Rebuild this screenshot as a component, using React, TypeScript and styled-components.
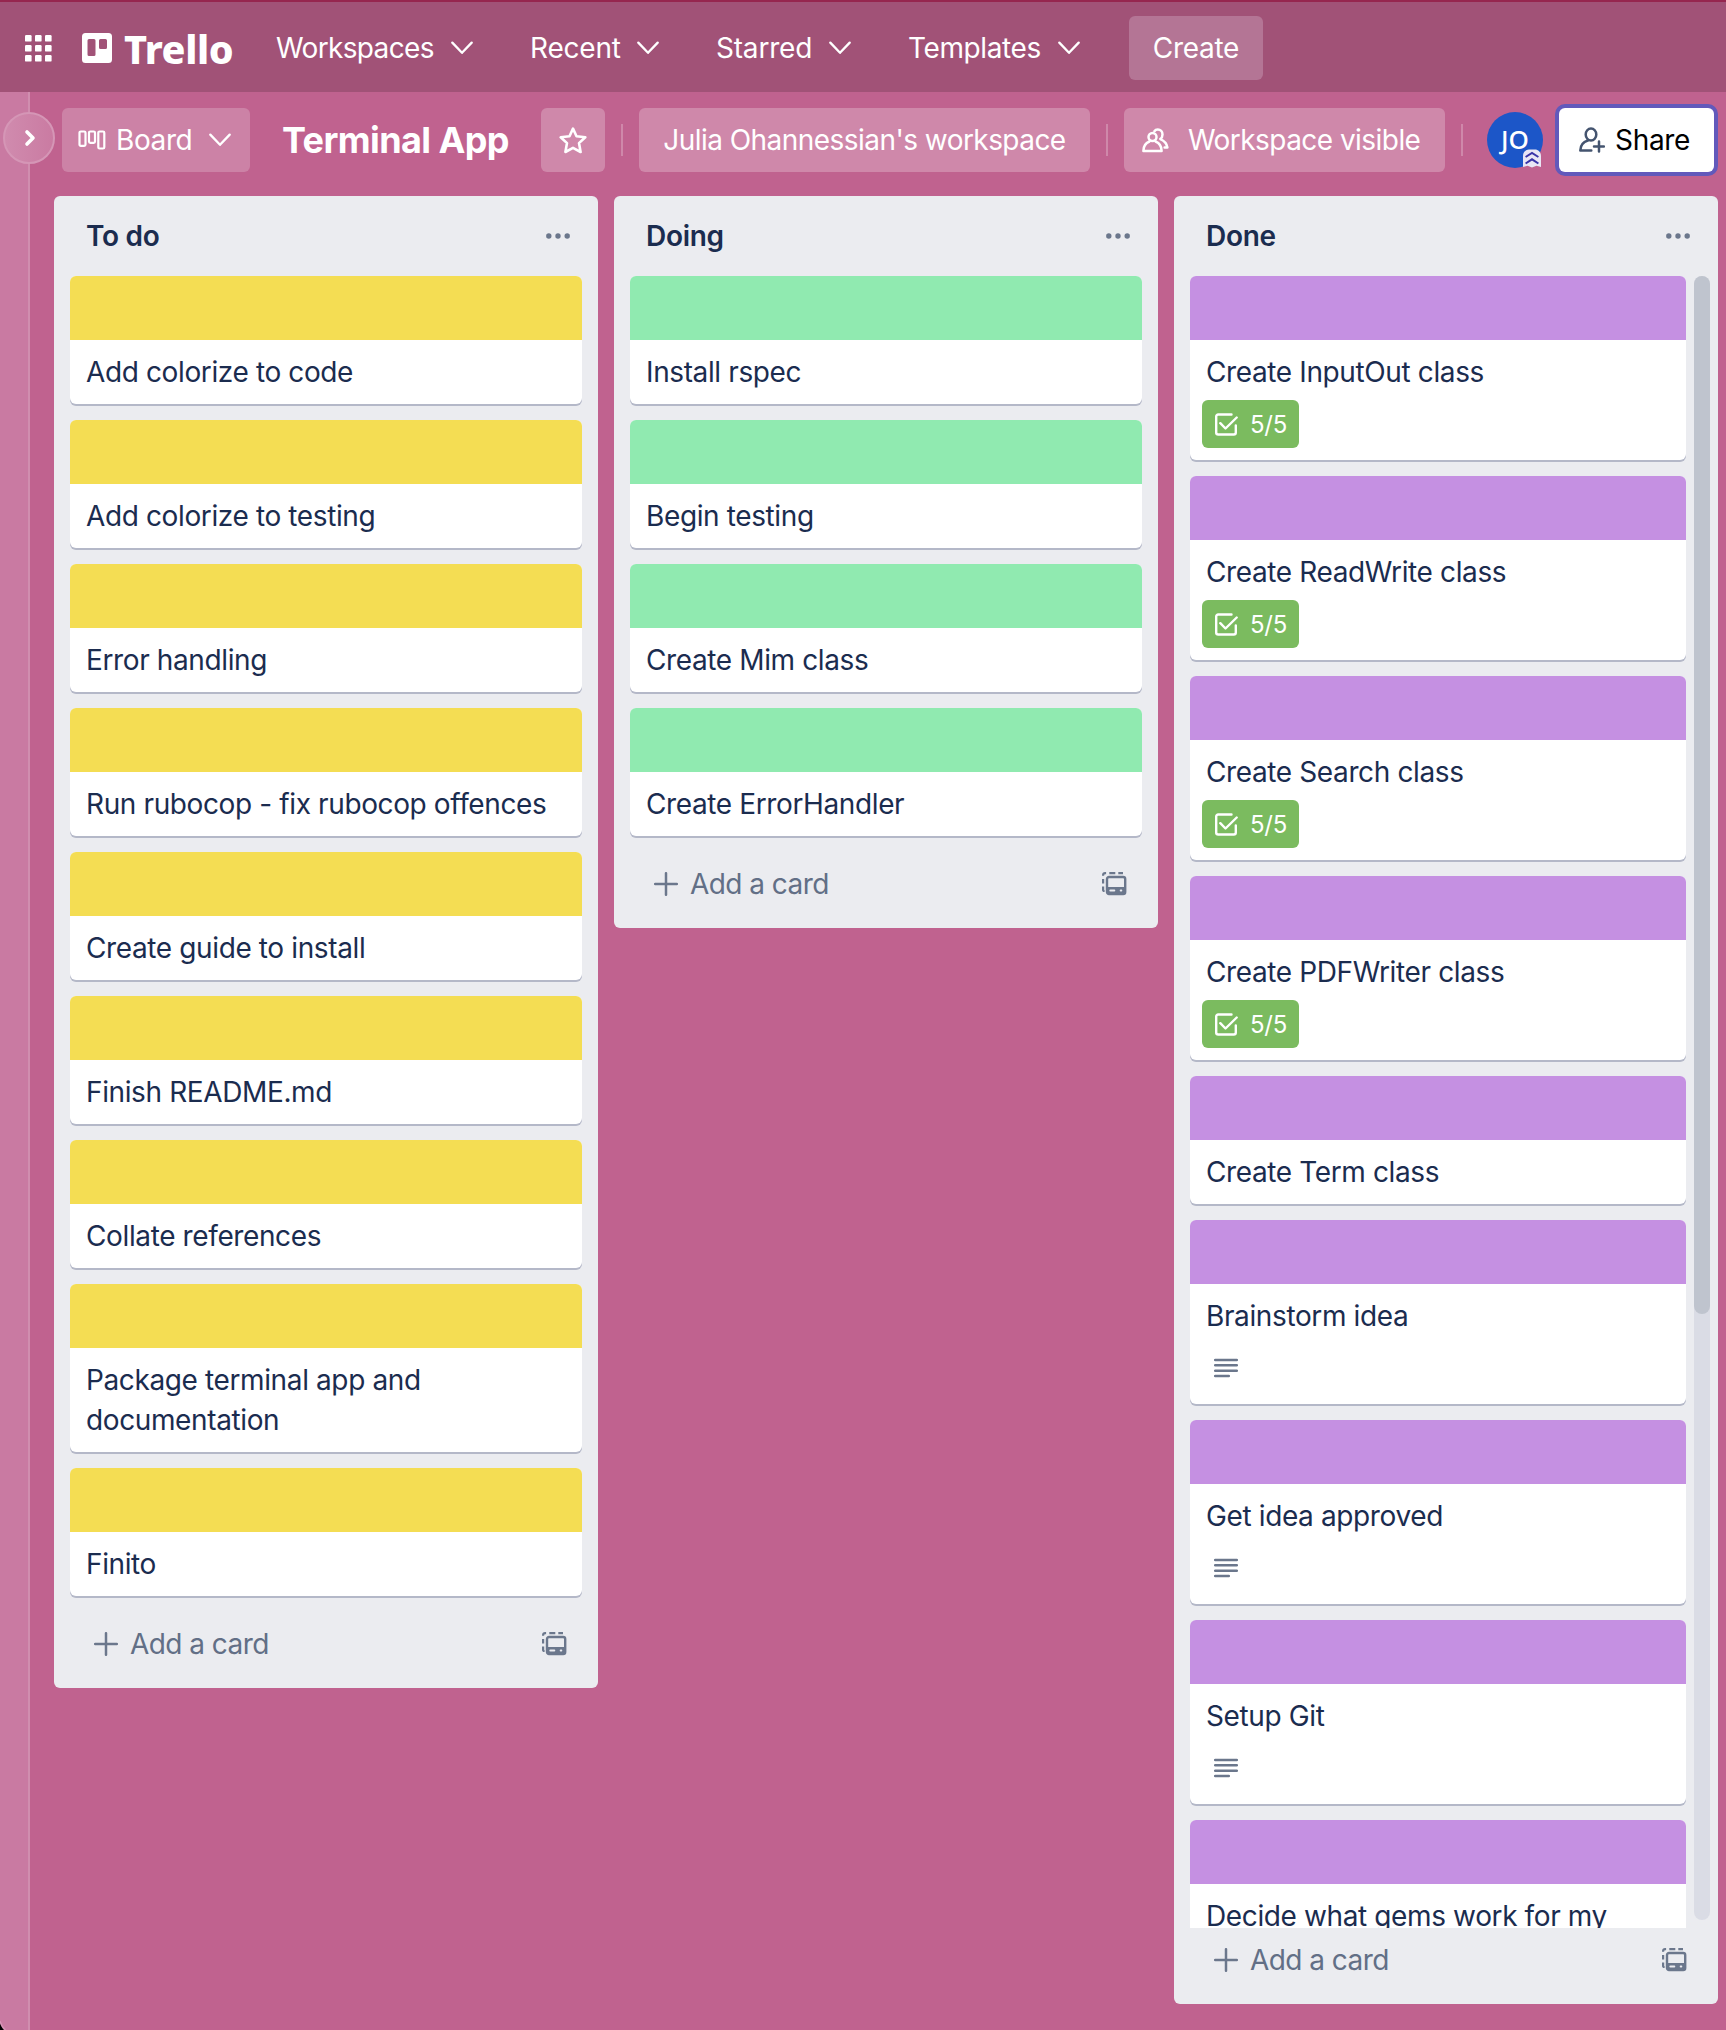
import React from "react";
import styled, { createGlobalStyle } from "styled-components";

const GlobalStyle = createGlobalStyle`
  * { box-sizing: border-box; }
  body { margin: 0; background: #c0628f; }
`;

const sans = `Inter, "Liberation Sans", sans-serif`;

const Page = styled.div`
  position: relative;
  width: 1726px;
  height: 2030px;
  display: flex;
  flex-direction: column;
  overflow: hidden;
  background: #c0628f;
  font-family: ${sans};
  font-size: 28px;
  color: #1b2c4f;
`;

const TopBar = styled.header`
  height: 92px;
  flex: none;
  display: flex;
  align-items: center;
  padding: 2px 0 0 25px;
  border-top: 2px solid #96264f;
  background: #a15277;
  color: #fff;
`;

const Brand = styled.div`
  display: flex;
  align-items: center;
  gap: 12px;
  margin-left: 30px;
  width: 194px;
`;

const Wordmark = styled.span`
  padding-top: 2px;
  font-family: "Noto Sans", sans-serif;
  font-weight: 800;
  font-size: 39.5px;
  line-height: 46px;
  letter-spacing: -0.4px;
`;

const NavItem = styled.div<{ $width: number; $tracking: number }>`
  display: flex;
  align-items: center;
  justify-content: space-between;
  width: ${(p) => p.$width}px;
  margin-right: 57px;
  white-space: nowrap;
  letter-spacing: ${(p) => p.$tracking}px;
`;

const CreateButton = styled.button`
  height: 64px;
  width: 134px;
  margin-left: -8px;
  padding: 0;
  border: 0;
  border-radius: 6px;
  background: #b47595;
  color: #fff;
  font: inherit;
  letter-spacing: -0.3px;
`;

const Body = styled.div`
  flex: 1;
  min-height: 0;
  display: flex;
`;

const Rail = styled.aside`
  position: relative;
  width: 30px;
  flex: none;
  border-right: 2px solid #d08eaf;
  background: #c97aa2;
`;

const RailToggle = styled.button`
  position: absolute;
  top: 20px;
  left: 3px;
  z-index: 1;
  width: 52px;
  height: 52px;
  padding: 0 0 0 2px;
  display: grid;
  place-items: center;
  border: 2px solid #d596b6;
  border-radius: 50%;
  background: linear-gradient(90deg, #d08bae, #ca7ba2);
`;

const Main = styled.main`
  flex: 1;
  display: flex;
  flex-direction: column;
`;

const BoardBar = styled.div`
  height: 104px;
  flex: none;
  display: flex;
  align-items: center;
  padding: 0 12px 8px 32px;
  color: #fff;
`;

const BarButton = styled.button<{ $width: number; $gap?: number; $tone?: string; $pad?: number; $tracking?: number }>`
  display: flex;
  align-items: center;
  justify-content: ${(p) => (p.$pad ? "flex-start" : "center")};
  gap: ${(p) => p.$gap ?? 0}px;
  width: ${(p) => p.$width}px;
  height: 64px;
  flex: none;
  padding: 0 0 0 ${(p) => p.$pad ?? 0}px;
  border: 0;
  border-radius: 6px;
  background: ${(p) => p.$tone ?? "#cf88aa"};
  color: #fff;
  font: inherit;
  letter-spacing: ${(p) => p.$tracking ?? -0.4}px;
  white-space: nowrap;
`;

const ViewName = styled.span`
  width: 83px;
  text-align: left;
`;

const BoardTitle = styled.h1`
  margin: 0 0 0 32px;
  width: 259px;
  font-size: 36px;
  font-weight: 700;
  letter-spacing: -0.6px;
  white-space: nowrap;
`;

const Divider = styled.span`
  width: 2px;
  height: 32px;
  margin: 0 16px;
  flex: none;
  background: #cf88aa;
`;

const Avatar = styled.div`
  position: relative;
  width: 56px;
  height: 56px;
  margin: 0 16px 0 8px;
  padding-bottom: 2px;
  flex: none;
  display: grid;
  place-items: center;
  border-radius: 50%;
  background: #1c56c8;
  font-family: "Noto Sans", sans-serif;
  font-size: 26px;
  font-weight: 500;
`;

const AdminMark = styled.svg`
  position: absolute;
  right: 1px;
  bottom: 0;
`;

const ShareButton = styled(BarButton)`
  background: #fff;
  color: #000;
  box-shadow: 0 0 0 4px #6259bb;
`;

const Lists = styled.div`
  display: flex;
  align-items: flex-start;
  gap: 16px;
  padding-left: 24px;
`;

const List = styled.section<{ $tall?: boolean }>`
  width: 544px;
  height: ${(p) => (p.$tall ? "1808px" : "auto")};
  flex: none;
  display: flex;
  flex-direction: column;
  border-radius: 6px;
  background: #ebecf0;
`;

const ListHeader = styled.div`
  height: 80px;
  flex: none;
  display: flex;
  align-items: center;
  justify-content: space-between;
  padding: 0 28px 0 32px;
`;

const ListTitle = styled.h2`
  margin: 0;
  font-size: 28px;
  font-weight: 600;
  letter-spacing: -0.3px;
`;

const Scroller = styled.div`
  flex: 0 1 auto;
  min-height: 0;
  display: flex;
  padding: 0 8px 0 16px;
`;

const Cards = styled.div`
  flex: 1;
  display: flex;
  flex-direction: column;
  gap: 16px;
  margin-right: 8px;
  overflow: hidden;
  padding-bottom: 16px;
`;

const ScrollTrack = styled.div`
  width: 16px;
  height: 1644px;
  border-radius: 8px;
  background: #dadce5;
`;

const ScrollThumb = styled.div`
  height: 1038px;
  border-radius: 8px;
  background: #bfc4ce;
`;

const Card = styled.article`
  flex: none;
  border-radius: 6px;
  background: #fff;
  box-shadow: 0 2px 0 #b4b8c8;
`;

const Cover = styled.div<{ $color: string }>`
  height: 64px;
  border-radius: 6px 6px 0 0;
  background: ${(p) => p.$color};
`;

const CardText = styled.div`
  padding: 12px 16px;
  line-height: 40px;
  letter-spacing: -0.38px;
`;

const BadgeRow = styled.div`
  height: 60px;
  margin-top: -4px;
  padding: 0 0 12px 12px;
  display: flex;
`;

const DoneBadge = styled.span`
  width: 97px;
  height: 48px;
  display: flex;
  align-items: center;
  gap: 12px;
  padding-left: 13px;
  border-radius: 6px;
  background: #7bbb5f;
  color: #fff;
  font-size: 24px;
  letter-spacing: -0.3px;
`;

const TextBadge = styled.span`
  height: 48px;
  display: flex;
  align-items: center;
  padding-left: 12px;
`;

const ListFooter = styled.div`
  height: 76px;
  flex: none;
  display: flex;
  align-items: center;
  padding: 0 31px 12px 40px;
  color: #6b778c;
`;

const FooterLabel = styled.span`
  flex: 1;
  margin-left: 12px;
  color: #626f86;
  letter-spacing: -0.55px;
`;

const Corner = styled.svg`
  position: absolute;
  left: 0;
  bottom: 0;
`;

const Chevron = () => (
  <svg width="22" height="14" viewBox="0 0 22 14" fill="none" stroke="#fff" strokeWidth="2.3" strokeLinecap="round" strokeLinejoin="round">
    <path d="M1.3 1.6 11 11.8 20.7 1.6" />
  </svg>
);

const AppsIcon = () => (
  <svg width="27" height="27" viewBox="0 0 27 27" fill="#fff">
    {[0, 10, 20].map((y) => [0, 10, 20].map((x) => <rect key={`${x}-${y}`} x={x} y={y} width="6.6" height="6.6" rx="1.2" />))}
  </svg>
);

const LogoMark = () => (
  <svg width="30" height="30" viewBox="0 0 30 30">
    <path
      fill="#fff"
      fillRule="evenodd"
      d="M3.5 0h23A3.5 3.5 0 0 1 30 3.5v23a3.5 3.5 0 0 1-3.5 3.5h-23A3.5 3.5 0 0 1 0 26.5v-23A3.5 3.5 0 0 1 3.5 0ZM7 6A1.5 1.5 0 0 0 5.5 7.5v14A1.5 1.5 0 0 0 7 23h5a1.5 1.5 0 0 0 1.5-1.5v-14A1.5 1.5 0 0 0 12 6ZM18.5 6A1.5 1.5 0 0 0 17 7.5v7A1.5 1.5 0 0 0 18.5 16h5a1.5 1.5 0 0 0 1.5-1.5v-7A1.5 1.5 0 0 0 23.5 6Z"
    />
  </svg>
);

const BoardIcon = () => (
  <svg width="28" height="20" viewBox="0 0 28 20" fill="none" stroke="#fff" strokeWidth="2.2">
    <rect x="1.5" y="1.5" width="6" height="14.3" rx="1.3" />
    <rect x="11" y="1.5" width="6" height="11.3" rx="1.3" />
    <rect x="20.3" y="1.5" width="6" height="17" rx="1.3" />
  </svg>
);

const StarIcon = () => (
  <svg width="28" height="27" viewBox="0 0 28 27" fill="none" stroke="#fff" strokeWidth="2.6" strokeLinejoin="round">
    <path d="M14 1.6 17.5 9.2 26.3 10.3 20 16.1 21.6 25 14 20.9 6.4 25 8 16.1 1.7 10.3 10.5 9.2Z" />
  </svg>
);

const PeopleIcon = () => (
  <svg width="27" height="25" viewBox="0 0 27 25" fill="none" stroke="#fff" strokeWidth="2.5" strokeLinejoin="round" strokeLinecap="round">
    <circle cx="10.5" cy="9" r="4" />
    <path d="M1.4 23h18.2c0-5-3-8.3-6-9.5M1.4 23c0-5 3-8.3 6-9.5" />
    <path d="M12.4 3.2C13.2 2 14.5 1.5 15.8 1.5c2.7 0 4.7 2.2 4.7 4.9 0 2.1-1 3.8-2.2 4.7 3.6 1.5 6.5 4.6 7.1 8.4h-2.8" />
  </svg>
);

const SharePersonIcon = () => (
  <svg width="26" height="26" viewBox="0 0 26 26" fill="none" stroke="#44546f" strokeWidth="2.5" strokeLinecap="round" strokeLinejoin="round">
    <ellipse cx="12" cy="7.5" rx="5.3" ry="6" />
    <path d="M8.8 13.5C4 15 1.4 18.5 1.3 23.5h11" />
    <path d="M20 14.5v10M15 19.5h10" />
  </svg>
);

const CheckIcon = () => (
  <svg width="23" height="23" viewBox="0 0 23 23" fill="none" stroke="#fff" strokeWidth="2.4" strokeLinecap="round" strokeLinejoin="round">
    <path d="M16.5 1.5H3.2a2 2 0 0 0-2 2v16a2 2 0 0 0 2 2h15.6a2 2 0 0 0 2-2v-7" />
    <path d="M5.3 10.2l5.2 5.3L21.7 4.5" />
  </svg>
);

const LinesIcon = () => (
  <svg width="24" height="20" viewBox="0 0 24 20" stroke="#6b778c" strokeWidth="2.5" strokeLinecap="round">
    <path d="M1.2 2h21.6M1.2 7.3h21.6M1.2 12.7h21.6M1.2 18h13.6" />
  </svg>
);

const PlusIcon = () => (
  <svg width="24" height="24" viewBox="0 0 24 24" stroke="#6b778c" strokeWidth="2.5" strokeLinecap="round">
    <path d="M12 1.2v21.6M1.2 12h21.6" />
  </svg>
);

const TemplateIcon = () => (
  <svg width="25" height="24" viewBox="0 0 25 24" fill="none" stroke="#6b778c" strokeWidth="2.2">
    <rect x="5" y="5" width="18.2" height="17" rx="2" strokeWidth="2.4" />
    <path d="M5 15h18.2v5.5a1.5 1.5 0 0 1-1.5 1.5H6.5A1.5 1.5 0 0 1 5 20.5Z" fill="#6b778c" stroke="none" />
    <path d="M8.3 18.5h4M18.7 18.5h.6" stroke="#ebecf0" strokeWidth="2" strokeLinecap="round" />
    <path d="M1.1 3.8V3a2 2 0 0 1 2-1.900h1M7.300 1.100h6M16.300 1.100h4.700M1.100 7v4.500M1.100 14.500V18a1 1 0 0 0 1 1h.5" />
  </svg>
);

const DotsIcon = () => (
  <svg width="24" height="6" viewBox="0 0 24 6" fill="#6b778c">
    <circle cx="2.8" cy="3" r="2.7" />
    <circle cx="12" cy="3" r="2.7" />
    <circle cx="21.2" cy="3" r="2.7" />
  </svg>
);

const YELLOW = "#f4dd53";
const GREEN = "#90eab0";
const PURPLE = "#c590e2";

type CardData = { text: string; badge?: "check" | "lines" };
type ListData = { title: string; color: string; cards: CardData[]; scroll?: boolean };

const lists: ListData[] = [
  {
    title: "To do",
    color: YELLOW,
    cards: [
      { text: "Add colorize to code" },
      { text: "Add colorize to testing" },
      { text: "Error handling" },
      { text: "Run rubocop - fix rubocop offences" },
      { text: "Create guide to install" },
      { text: "Finish README.md" },
      { text: "Collate references" },
      { text: "Package terminal app and documentation" },
      { text: "Finito" },
    ],
  },
  {
    title: "Doing",
    color: GREEN,
    cards: [{ text: "Install rspec" }, { text: "Begin testing" }, { text: "Create Mim class" }, { text: "Create ErrorHandler" }],
  },
  {
    title: "Done",
    color: PURPLE,
    scroll: true,
    cards: [
      { text: "Create InputOut class", badge: "check" },
      { text: "Create ReadWrite class", badge: "check" },
      { text: "Create Search class", badge: "check" },
      { text: "Create PDFWriter class", badge: "check" },
      { text: "Create Term class" },
      { text: "Brainstorm idea", badge: "lines" },
      { text: "Get idea approved", badge: "lines" },
      { text: "Setup Git", badge: "lines" },
      { text: "Decide what gems work for my" },
    ],
  },
];

const nav = [
  { label: "Workspaces", width: 197, tracking: -0.65 },
  { label: "Recent", width: 129, tracking: -0.2 },
  { label: "Starred", width: 135, tracking: -0.2 },
  { label: "Templates", width: 172, tracking: -0.4 },
];

export default function App() {
  return (
    <Page>
      <GlobalStyle />
      <TopBar>
        <AppsIcon />
        <Brand>
          <LogoMark />
          <Wordmark>Trello</Wordmark>
        </Brand>
        {nav.map((n) => (
          <NavItem key={n.label} $width={n.width} $tracking={n.tracking}>
            {n.label}
            <Chevron />
          </NavItem>
        ))}
        <CreateButton>Create</CreateButton>
      </TopBar>
      <Body>
        <Rail>
          <RailToggle aria-label="Expand sidebar">
            <svg width="12" height="18" viewBox="0 0 12 18" fill="none" stroke="#fff" strokeWidth="3.6" strokeLinecap="round" strokeLinejoin="round">
              <path d="M3 3l6 6-6 6" />
            </svg>
          </RailToggle>
        </Rail>
        <Main>
          <BoardBar>
            <BarButton $width={188} $gap={10} $pad={16} $tone="#cc82a6">
              <BoardIcon />
              <ViewName>Board</ViewName>
              <Chevron />
            </BarButton>
            <BoardTitle>Terminal App</BoardTitle>
            <BarButton $width={64} aria-label="Star">
              <StarIcon />
            </BarButton>
            <Divider />
            <BarButton $width={451} $tracking={-0.55}>
              Julia Ohannessian's workspace
            </BarButton>
            <Divider />
            <BarButton $width={321} $gap={19} $pad={18} $tracking={-0.55}>
              <PeopleIcon />
              Workspace visible
            </BarButton>
            <Divider />
            <Avatar>
              JO
              <AdminMark width="20" height="19" viewBox="0 0 20 19" fill="none">
                <path d="M1 18V7c0-4 3-6.5 6-6.5h6c3 0 6 2.5 6 6.5v11l-4.5-1.2L10 18.5l-4.5-1.7Z" fill="#e9e6f5" />
                <path d="M3.6 8 10 4l6.4 4M3.6 14.5 10 10.3l6.4 4.2" stroke="#3a34a8" strokeWidth="2" />
              </AdminMark>
            </Avatar>
            <ShareButton $width={155} $gap={10} $pad={20} $tracking={-0.3}>
              <SharePersonIcon />
              Share
            </ShareButton>
          </BoardBar>
          <Lists>
            {lists.map((list) => (
              <List key={list.title} $tall={list.scroll}>
                <ListHeader>
                  <ListTitle>{list.title}</ListTitle>
                  <DotsIcon />
                </ListHeader>
                <Scroller>
                  <Cards>
                    {list.cards.map((card) => (
                      <Card key={card.text}>
                        <Cover $color={list.color} />
                        <CardText>{card.text}</CardText>
                        {card.badge && (
                          <BadgeRow>
                            {card.badge === "check" ? (
                              <DoneBadge>
                                <CheckIcon />
                                5/5
                              </DoneBadge>
                            ) : (
                              <TextBadge>
                                <LinesIcon />
                              </TextBadge>
                            )}
                          </BadgeRow>
                        )}
                      </Card>
                    ))}
                  </Cards>
                  {list.scroll && (
                    <ScrollTrack>
                      <ScrollThumb />
                    </ScrollTrack>
                  )}
                </Scroller>
                <ListFooter>
                  <PlusIcon />
                  <FooterLabel>Add a card</FooterLabel>
                  <TemplateIcon />
                </ListFooter>
              </List>
            ))}
          </Lists>
        </Main>
      </Body>
      <Corner width="20" height="16" viewBox="0 0 20 16">
        <path d="M0 9C.8 12 2.500 14.500 4 16H0Z" fill="#000" />
        <path d="M0 7C1 10.500 3 13.700 5.500 16" fill="none" stroke="#d795b7" strokeWidth="1.200" />
      </Corner>
    </Page>
  );
}
